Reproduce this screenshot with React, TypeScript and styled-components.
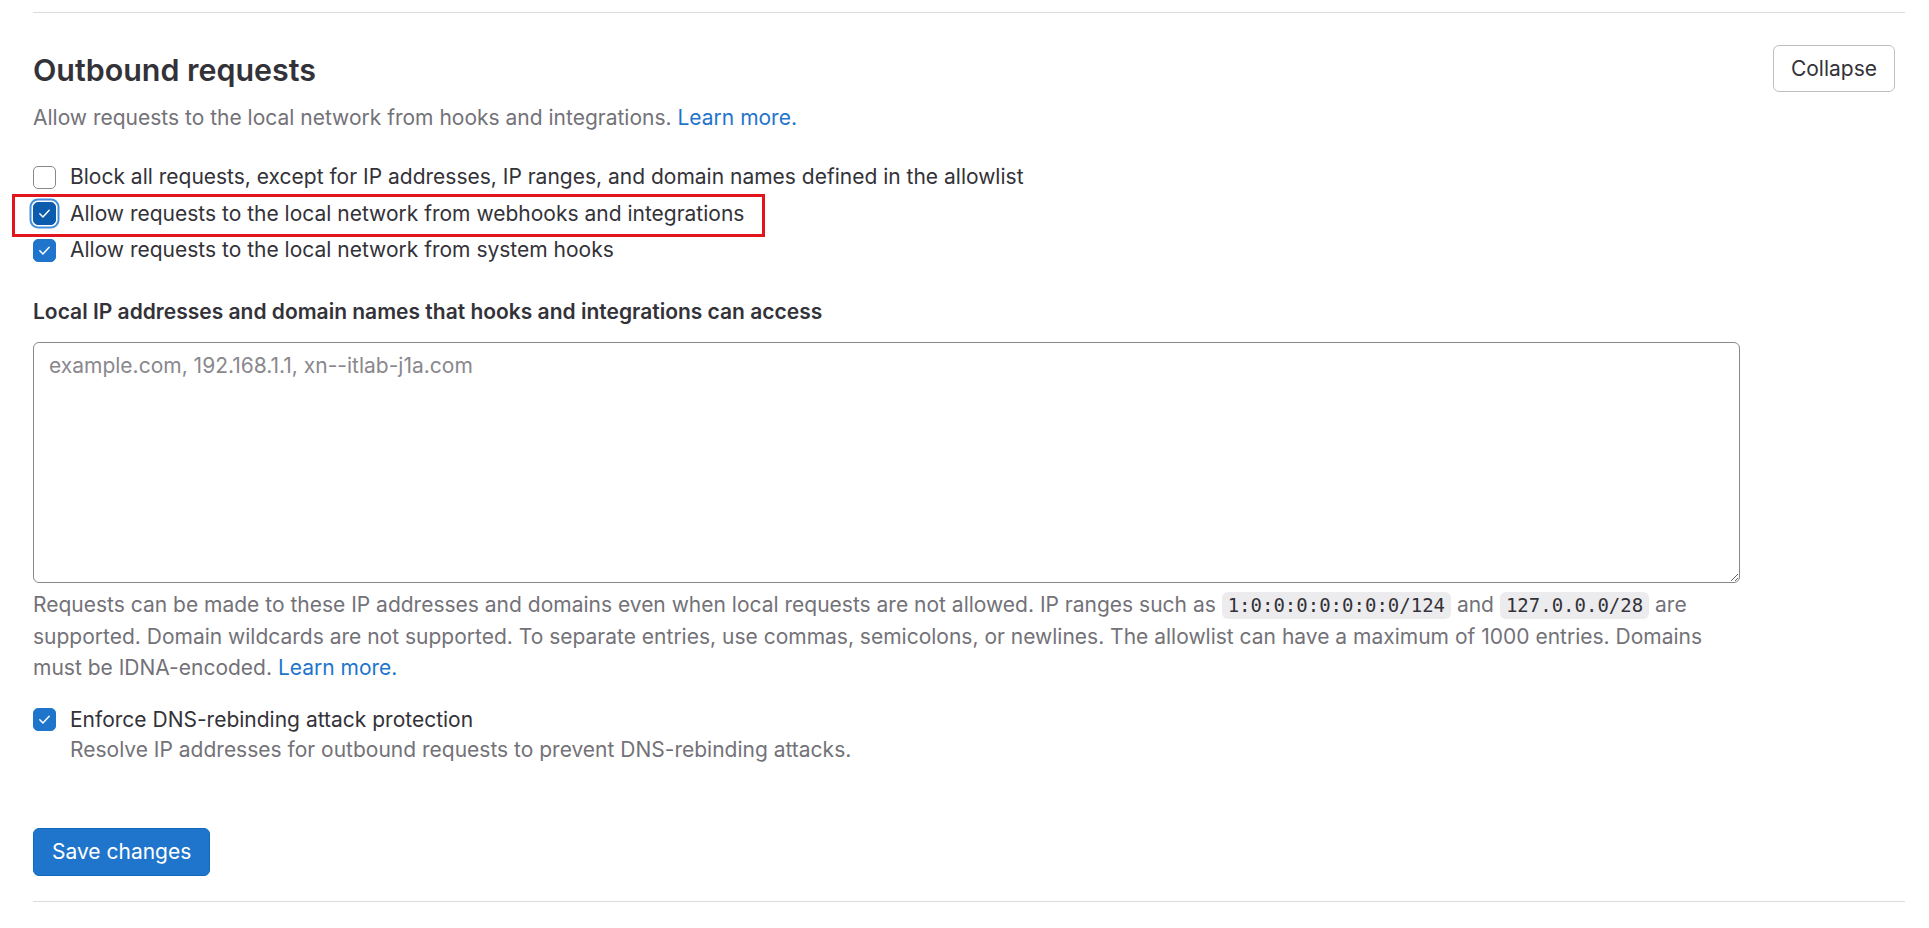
import styled, { createGlobalStyle } from 'styled-components';

const GlobalStyle = createGlobalStyle`
  body {
    margin: 0;
    background: #ffffff;
    font-family: Inter, 'Noto Sans', sans-serif;
    color: #333238;
  }
`;

const Check = ({ checked, focused }: { checked: boolean; focused?: boolean }) => (
  <Box checked={checked} focused={focused}>
    {checked && (
      <svg width="17" height="17" viewBox="0 0 16 16" fill="none">
        <path
          d="M3.6 8.3l2.9 3L12.4 4.9"
          stroke="#ffffff"
          strokeWidth="1.4"
          strokeLinecap="round"
          strokeLinejoin="round"
        />
      </svg>
    )}
  </Box>
);

const App = () => {
  return (
    <>
      <GlobalStyle />
      <Page>
        <Section>
          <Header>
            <div>
              <Title>Outbound requests</Title>
              <Description>
                Allow requests to the local network from hooks and integrations.{' '}
                <Link href="#">Learn more.</Link>
              </Description>
            </div>
            <OutlineButton>Collapse</OutlineButton>
          </Header>

          <CheckGroup>
            <CheckRow>
              <Check checked={false} />
              <Label>
                Block all requests, except for IP addresses, IP ranges, and domain names
                defined in the allowlist
              </Label>
            </CheckRow>
            <CheckRow>
              <Check checked focused />
              <Label>Allow requests to the local network from webhooks and integrations</Label>
              <Highlight />
            </CheckRow>
            <CheckRow>
              <Check checked />
              <Label>Allow requests to the local network from system hooks</Label>
            </CheckRow>
          </CheckGroup>

          <FieldLabel>Local IP addresses and domain names that hooks and integrations can access</FieldLabel>
          <TextArea placeholder="example.com, 192.168.1.1, xn--itlab-j1a.com" />
          <HelpText>
            Requests can be made to these IP addresses and domains even when local requests are
            not allowed. IP ranges such as <Code>1:0:0:0:0:0:0:0/124</Code> and{' '}
            <Code>127.0.0.0/28</Code> are supported. Domain wildcards are not supported. To
            separate entries, use commas, semicolons, or newlines. The allowlist can have a
            maximum of 1000 entries. Domains must be IDNA-encoded.{' '}
            <Link href="#">Learn more.</Link>
          </HelpText>

          <DnsRow>
            <Check checked />
            <div>
              <Label>Enforce DNS-rebinding attack protection</Label>
              <SubText>Resolve IP addresses for outbound requests to prevent DNS-rebinding attacks.</SubText>
            </div>
          </DnsRow>

          <PrimaryButton>Save changes</PrimaryButton>
        </Section>
      </Page>
    </>
  );
};

export default App;

const Page = styled.div`
  padding: 12px 24px 0 33px;
`;

const Section = styled.section`
  border-top: 1px solid #dcdcde;
  border-bottom: 1px solid #dcdcde;
  padding: 32px 0 25px;
`;

const Header = styled.div`
  display: flex;
  justify-content: space-between;
  align-items: flex-start;
  padding-right: 10px;
`;

const Title = styled.h2`
  margin: 0;
  font-size: 30.4px;
  line-height: 50px;
  font-weight: 600;
  color: #333238;
`;

const Description = styled.p`
  margin: 8px 0 0;
  font-size: 21px;
  line-height: 30px;
  color: #737278;
`;

const Link = styled.a`
  color: #1f75cb;
  text-decoration: none;
`;

const OutlineButton = styled.button`
  height: 47px;
  padding: 0 17px;
  border: 1px solid #bfbfc3;
  border-radius: 6px;
  background: #ffffff;
  color: #333238;
  font-family: inherit;
  font-size: 21px;
  cursor: pointer;
`;

const CheckGroup = styled.div`
  display: flex;
  flex-direction: column;
  gap: 6.5px;
  margin-top: 29px;
`;

const CheckRow = styled.div`
  position: relative;
  display: flex;
  align-items: center;
  height: 30px;
`;

const Box = styled.span<{ checked: boolean; focused?: boolean }>`
  flex: none;
  width: 23px;
  height: 23px;
  box-sizing: border-box;
  margin-right: 14px;
  border-radius: 5px;
  display: flex;
  align-items: center;
  justify-content: center;
  border: 1px solid
    ${(props) => (props.checked ? (props.focused ? '#0b5cad' : '#1f75cb') : '#89888d')};
  background: ${(props) => (props.checked ? (props.focused ? '#0b5cad' : '#1f75cb') : '#ffffff')};
  box-shadow: ${(props) => (props.focused ? '0 0 0 1.5px #ffffff, 0 0 0 3.5px #428fdc' : 'none')};
`;

const Label = styled.span`
  font-size: 21px;
  line-height: 30px;
  color: #333238;
`;

const Highlight = styled.span`
  position: absolute;
  left: -21px;
  top: -5px;
  width: 753px;
  height: 43px;
  box-sizing: border-box;
  border: 3px solid #e3151c;
  pointer-events: none;
`;

const FieldLabel = styled.label`
  display: block;
  margin-top: 32px;
  font-size: 21px;
  line-height: 30px;
  font-weight: 600;
  color: #333238;
`;

const TextArea = styled.textarea`
  display: block;
  margin-top: 15px;
  width: 1707px;
  height: 241px;
  box-sizing: border-box;
  padding: 8px 15px;
  border: 1px solid #89888d;
  border-radius: 6px;
  font-family: inherit;
  font-size: 21px;
  line-height: 30px;
  color: #333238;
  &::placeholder {
    color: #89888d;
  }
`;

const HelpText = styled.p`
  margin: 6px 0 0;
  max-width: 1707px;
  font-size: 21px;
  line-height: 31.5px;
  color: #737278;
`;

const Code = styled.code`
  display: inline-block;
  font-family: 'DejaVu Sans Mono', 'Liberation Mono', monospace;
  font-size: 19px;
  line-height: 21px;
  padding: 3px 6px;
  border-radius: 6px;
  background: #ececef;
  color: #333238;
`;

const DnsRow = styled.div`
  display: flex;
  align-items: flex-start;
  margin-top: 21px;
  & > span {
    margin-top: 3px;
  }
`;

const SubText = styled.div`
  font-size: 21px;
  line-height: 30px;
  color: #737278;
`;

const PrimaryButton = styled.button`
  display: block;
  margin-top: 63px;
  height: 48px;
  padding: 0 18px;
  border: 1px solid #1068bf;
  border-radius: 6px;
  background: #1f75cb;
  color: #ffffff;
  font-family: inherit;
  font-size: 21px;
  cursor: pointer;
`;
